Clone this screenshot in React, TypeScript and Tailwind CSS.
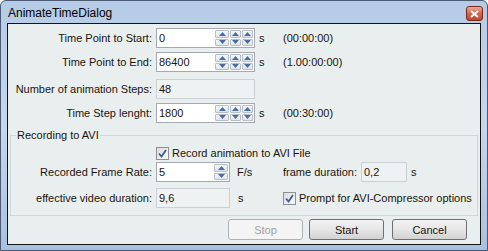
import type { ReactNode } from "react";

const TEXT = "text-[#1b140c]";

function Arrow({ up }: { up: boolean }) {
  return (
    <svg width="7" height="4" viewBox="0 0 7 4" className="block">
      <path d={up ? "M0 4 L3.5 0 L7 4 Z" : "M0 0 L3.5 4 L7 0 Z"} fill="#4c6c9e" />
    </svg>
  );
}

// eine Auf/Ab-Spinner-Einheit
function Spin({ wide }: { wide?: boolean }) {
  return (
    <div className={`flex h-full flex-col gap-[1px] ${wide ? "w-[14px]" : "w-[11px]"}`}>
      <div className="flex flex-1 items-center justify-center rounded-[1px] border border-[#b7bec7] bg-gradient-to-b from-[#f5f7fa] to-[#dfe5ec]">
        <Arrow up />
      </div>
      <div className="flex flex-1 items-center justify-center rounded-[1px] border border-[#b7bec7] bg-gradient-to-b from-[#f5f7fa] to-[#dfe5ec]">
        <Arrow up={false} />
      </div>
    </div>
  );
}

function SpinInput({ value, width, triple }: { value: string; width: string; triple?: boolean }) {
  return (
    <div className={`flex h-[20px] items-stretch border border-[#a3a9b1] bg-white ${width}`}>
      <span className={`flex-1 pl-[2px] leading-[18px] ${TEXT}`}>{value}</span>
      <div className="flex gap-[1px] py-[1px] pr-[1px]">
        <Spin wide />
        {triple ? (
          <>
            <Spin />
            <Spin />
          </>
        ) : null}
      </div>
    </div>
  );
}

function ReadOnly({ value, width }: { value: string; width: string }) {
  return (
    <div className={`h-[20px] border border-[#cbd1d2] bg-[#eef2f2] pl-[2px] leading-[18px] ${TEXT} ${width}`}>
      {value}
    </div>
  );
}

function Check({ children }: { children: ReactNode }) {
  return (
    <div className="flex items-center">
      <span className="grid h-[13px] w-[13px] place-items-center border border-[#8e8f8f] bg-gradient-to-br from-[#dcdcdc] to-[#fafafa]">
        <svg width="9" height="9" viewBox="0 0 9 9">
          <path d="M1 4.5 L3.5 7.5 L8 1" fill="none" stroke="#3c5c9a" strokeWidth="1.8" />
        </svg>
      </span>
      <span className={`ml-[3px] ${TEXT}`}>{children}</span>
    </div>
  );
}

function Label({ children, w }: { children: ReactNode; w: string }) {
  return <span className={`${w} shrink-0 pr-[4px] text-right ${TEXT}`}>{children}</span>;
}

function Button({ children, disabled }: { children: ReactNode; disabled?: boolean }) {
  return (
    <button
      type="button"
      disabled={disabled}
      className={
        disabled
          ? "h-[21px] w-[75px] rounded-[3px] border border-[#adb2b5] bg-[#f4f4f4] text-[#a3a3a3]"
          : `h-[21px] w-[75px] rounded-[3px] border border-[#707070] bg-gradient-to-b from-[#f3f3f3] via-[#e6e6e6] to-[#d2d2d2] ${TEXT}`
      }
    >
      {children}
    </button>
  );
}

export default function App() {
  return (
    <div className="flex h-[251px] w-[488px] flex-col overflow-hidden rounded-t-[6px] border border-[#4a5a74] bg-gradient-to-b from-[#b5cbe6] via-[#c6d7ec] to-[#a9c1e0] font-['Liberation_Sans',Arial,sans-serif] text-[11px] leading-[14px]">
      {/* Titelleiste */}
      <div className="flex h-[22px] shrink-0 items-center justify-between pl-[7px] pr-[4px]">
        <span className="mt-[2px] text-[12px] text-black">AnimateTimeDialog</span>
        <span className="mt-[3px] grid h-[15px] w-[17px] place-items-center rounded-[3px] border border-[#7b2b1c] bg-gradient-to-b from-[#e9a898] via-[#d5644c] to-[#c2442c]">
          <svg width="9" height="8" viewBox="0 0 9 8">
            <path d="M1 1 L8 7 M8 1 L1 7" stroke="white" strokeWidth="2" />
          </svg>
        </span>
      </div>

      {/* Client-Bereich */}
      <div className="mx-[6px] flex h-[222px] flex-col border border-[#141414] bg-[#e9eeee] pt-[4px]">
        <div className="flex items-center">
          <Label w="w-[148px]">Time Point to Start:</Label>
          <SpinInput value="0" width="w-[99px]" triple />
          <span className={`ml-[4px] w-[24px] ${TEXT}`}>s</span>
          <span className={TEXT}>(00:00:00)</span>
        </div>
        <div className="mt-[4px] flex items-center">
          <Label w="w-[148px]">Time Point to End:</Label>
          <SpinInput value="86400" width="w-[99px]" triple />
          <span className={`ml-[4px] w-[24px] ${TEXT}`}>s</span>
          <span className={TEXT}>(1.00:00:00)</span>
        </div>
        <div className="mt-[7px] flex items-center">
          <Label w="w-[148px]">Number of animation Steps:</Label>
          <ReadOnly value="48" width="w-[99px]" />
        </div>
        <div className="mt-[4px] flex items-center">
          <Label w="w-[148px]">Time Step lenght:</Label>
          <SpinInput value="1800" width="w-[99px]" triple />
          <span className={`ml-[4px] w-[24px] ${TEXT}`}>s</span>
          <span className={TEXT}>(00:30:00)</span>
        </div>

        <fieldset className="mx-[2px] mt-[6px] border border-[#cfd7da] pb-[7px]">
          <legend className={`ml-[5px] px-[1px] leading-[12px] ${TEXT}`}>Recording to AVI</legend>
          <div className="mt-[5px] flex h-[14px] items-center pl-[145px]">
            <Check>Record animation to AVI File</Check>
          </div>
          <div className="mt-[2px] flex items-center">
            <Label w="w-[145px]">Recorded Frame Rate:</Label>
            <SpinInput value="5" width="w-[74px]" />
            <span className={`ml-[7px] w-[46px] ${TEXT}`}>F/s</span>
            <span className={`w-[78px] ${TEXT}`}>frame duration:</span>
            <ReadOnly value="0,2" width="w-[46px]" />
            <span className={`ml-[4px] ${TEXT}`}>s</span>
          </div>
          <div className="mt-[6px] flex items-center">
            <Label w="w-[145px]">effective video duration:</Label>
            <ReadOnly value="9,6" width="w-[74px]" />
            <span className={`ml-[8px] w-[45px] ${TEXT}`}>s</span>
            <Check>Prompt for AVI-Compressor options</Check>
          </div>
        </fieldset>

        <div className="mt-[3px] flex justify-end pr-[13px]">
          <Button disabled>Stop</Button>
          <div className="ml-[6px]">
            <Button>Start</Button>
          </div>
          <div className="ml-[8px]">
            <Button>Cancel</Button>
          </div>
        </div>
      </div>
    </div>
  );
}
